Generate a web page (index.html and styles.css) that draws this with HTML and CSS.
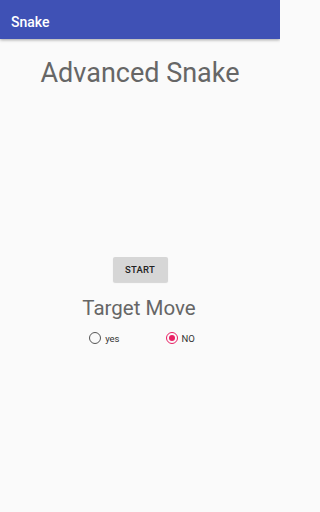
FILE: index.html
```html
<!DOCTYPE html>
<html>
<head>
<meta charset="utf-8">
<link rel="stylesheet" href="styles.css">
</head>
<body>
<div class="appbar"><span class="apptitle">Snake</span></div>
<main class="content">
  <h1 class="title">Advanced Snake</h1>
  <div class="spacer"></div>
  <button class="start">START</button>
  <h2 class="subtitle">Target Move</h2>
  <div class="radios">
    <label class="radio"><span class="circle"></span><span class="rlabel">yes</span></label>
    <label class="radio"><span class="circle checked"></span><span class="rlabel">NO</span></label>
  </div>
</main>
</body>
</html>
```
FILE: styles.css
```css
html, body { margin: 0; padding: 0; }
body {
  width: 280px; height: 512px; background: #fafafa;
  font-family: Roboto, "Noto Sans", sans-serif;
  overflow: hidden;
}
.appbar {
  height: 39px; background: #3f51b5;
  box-shadow: 0 1px 3px rgba(0,0,0,0.35);
  display: flex; align-items: center;
  padding-left: 11px; box-sizing: border-box;
  position: relative; z-index: 1;
}
.apptitle { color: #fff; font-size: 14px; font-weight: 500; margin-top: 4px; }
.content { display: flex; flex-direction: column; align-items: center; }
.title {
  margin: 16px 0 0; font-weight: 400; font-size: 27px; color: #666;
  line-height: 36px;
}
.spacer { height: 166px; }
.start {
  width: 55px; height: 25px; border: none; border-radius: 2px;
  background: #d6d6d6; color: #222; font-family: Roboto, sans-serif;
  font-size: 9.5px; font-weight: 500; padding: 0; letter-spacing: 0.2px;
  box-shadow: 0 1px 1px rgba(0,0,0,0.15);
}
.subtitle {
  margin: 13px 0 0; font-weight: 400; font-size: 20.5px; color: #666; line-height: 26px;
  margin-left: -2px;
}
.radios { display: flex; gap: 46px; margin-top: 11px; margin-left: 4px; }
.radio { display: flex; align-items: center; gap: 4px; }
.circle {
  width: 10px; height: 10px; border: 1.6px solid #555; border-radius: 50%;
  position: relative; box-sizing: content-box;
}
.circle.checked { border-color: #e91e63; }
.circle.checked::after {
  content: ""; position: absolute; left: 2px; top: 2px; width: 6px; height: 6px;
  border-radius: 50%; background: #e91e63;
}
.rlabel { font-size: 9.5px; color: #333; }
```
